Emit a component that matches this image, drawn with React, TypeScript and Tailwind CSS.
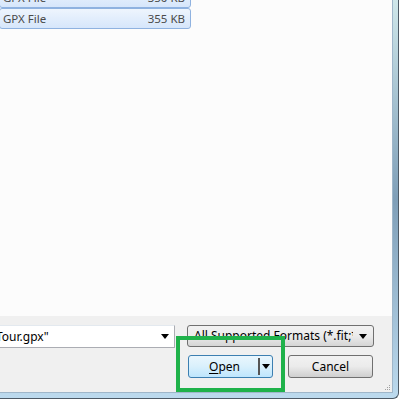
import React from "react";

const font = { fontFamily: '"Noto Sans", "Open Sans", "Liberation Sans", sans-serif' };

function Tri() {
  return (
    <svg width="8" height="5" viewBox="0 0 8 5" className="shrink-0">
      <path d="M0 0H8L4 5Z" fill="#000" />
    </svg>
  );
}

function Row({ name, size }: { name: string; size: string }) {
  return (
    <div className="w-[192px] h-[21px] -ml-[1px] flex items-center justify-between px-[3px] border border-[#8fb2e0] rounded-[3px] bg-gradient-to-b from-[#eef5fd] to-[#d6e6fb] text-[11.5px] text-[#4a4a4a] leading-none">
      <span>{name}</span>
      <span className="pr-[2px]">{size}</span>
    </div>
  );
}

export default function App() {
  return (
    <div className="w-[400px] h-[400px] bg-white overflow-hidden" style={font}>
      <div className="w-[399px] h-[399px] rounded-br-[6px] border-r border-b border-[#4d5a66] bg-gradient-to-b from-[#cfe7ea] via-[#7f9fb8] to-[#bcdaee] pr-[5px] pb-[5px]">
        <div className="w-[393px] h-[393px] border-r border-b border-[#9fb6c9] flex flex-col">
          <div className="h-[316px] shrink-0 bg-[#fcfcfc] overflow-hidden">
            <div className="flex flex-col -mt-[13px]">
              <Row name="GPX File" size="350 KB" />
              <Row name="GPX File" size="355 KB" />
            </div>
          </div>
          <div className="relative flex-1 bg-[#f0f0f0] pt-[9px]">
            <div className="flex">
              <div className="-ml-[10px] w-[185px] h-[23px] bg-white border border-[#abadb3] border-t-[#e3e9ef] flex items-center justify-between pl-[7px] pr-[5px] text-[12px] text-black overflow-hidden">
                <span className="-ml-[2px]">Tour.gpx"</span>
                <Tri />
              </div>
              <div className="ml-[12px] w-[187px] h-[22px] rounded-[3px] border border-[#707070] bg-gradient-to-b from-[#f2f2f2] via-[#ebebeb] to-[#d5d5d5] flex items-center pl-[6px] pr-[6px] text-[12px] text-black">
                <span className="flex-1 whitespace-nowrap overflow-hidden">All Supported Formats (*.fit;*.gpx)</span>
                <span className="ml-[6px]"><Tri /></span>
              </div>
            </div>
            <div className="flex mt-[7px]">
              <div className="ml-[188px] w-[85px] h-[23px] rounded-[3px] border border-[#3c7fb1] bg-gradient-to-b from-[#eaf6fd] via-[#d9f0fc] to-[#bee6fd] flex items-center text-[12px] text-black">
                <div className="flex-1 text-center pl-[2px]">
                  <span className="underline underline-offset-2">O</span>pen
                </div>
                <div className="w-[2px] h-[17px] bg-[#555]" />
                <span className="w-[12px] flex justify-center"><Tri /></span>
              </div>
              <div className="ml-[15px] w-[85px] h-[23px] rounded-[3px] border border-[#707070] bg-gradient-to-b from-[#f2f2f2] via-[#ebebeb] to-[#cfcfcf] flex items-center justify-center text-[12px] text-black">
                Cancel
              </div>
            </div>
            <div className="absolute right-[2px] bottom-[2px] grid grid-cols-3 gap-[1px]">
              <span />
              <span />
              <span className="w-[1px] h-[1px] bg-[#a0a0a0]" />
              <span />
              <span className="w-[1px] h-[1px] bg-[#a0a0a0]" />
              <span className="w-[1px] h-[1px] bg-[#a0a0a0]" />
              <span className="w-[1px] h-[1px] bg-[#a0a0a0]" />
              <span className="w-[1px] h-[1px] bg-[#a0a0a0]" />
              <span className="w-[1px] h-[1px] bg-[#a0a0a0]" />
            </div>
            <div className="absolute left-[176px] top-[20px] w-[109px] h-[56px] border-[4px] border-[#1fb24a]" />
          </div>
        </div>
      </div>
    </div>
  );
}
